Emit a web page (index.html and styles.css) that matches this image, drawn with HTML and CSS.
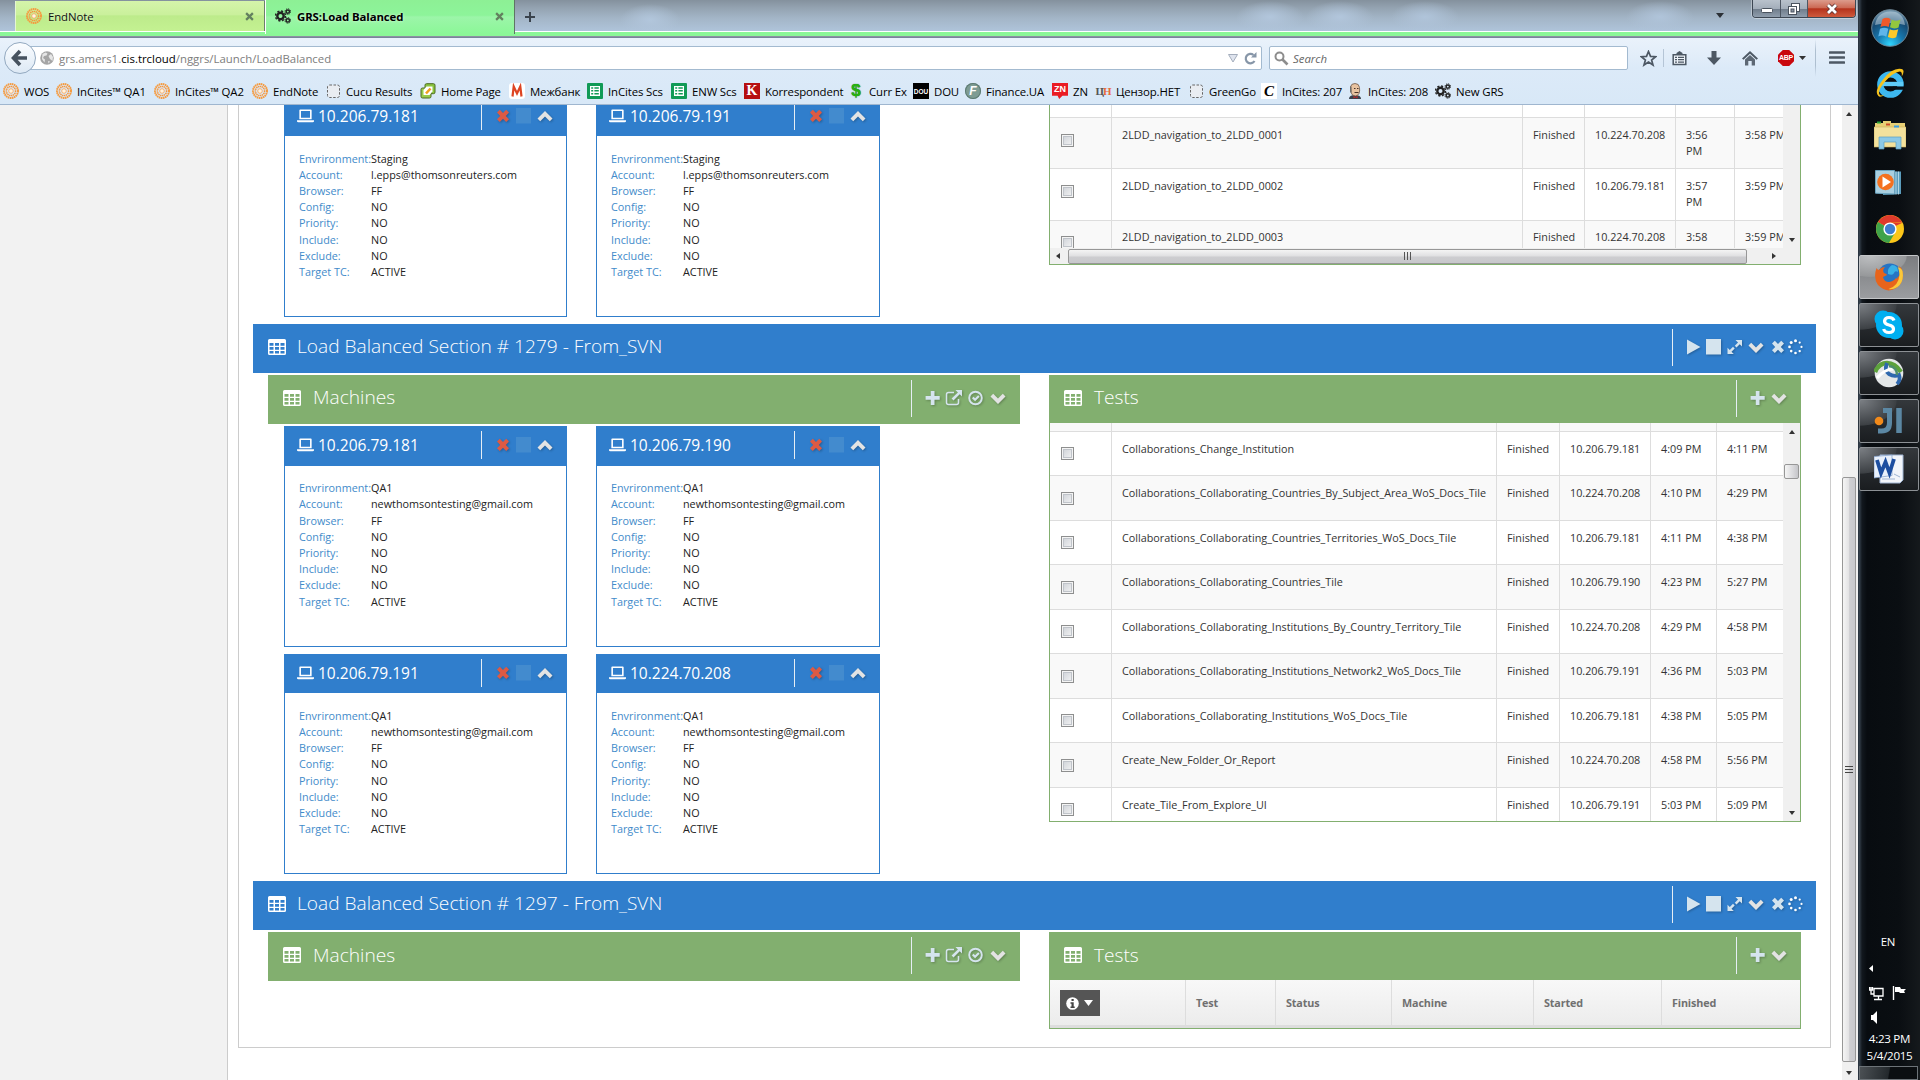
FILE: index.html
```
<!DOCTYPE html>
<html lang="en">
<head>
<meta charset="utf-8">
<title>GRS:Load Balanced</title>
<link rel="stylesheet" href="styles.css">
</head>
<body>
<svg class="sprite" aria-hidden="true">
  <symbol id="table" viewBox="0 0 18 16"><path fill="#fff" fill-rule="evenodd" d="M1.5 0h15Q18 0 18 1.500v13q0 1.500-1.500 1.500h-15Q0 16 0 14.500v-13Q0 0 1.500 0zM1.500 4v2.800h4V4zM7 4v2.800h4V4zm5.500 0v2.800h4V4zM1.500 8v2.800h4V8zM7 8v2.800h4V8zm5.500 0v2.800h4V8zM1.500 12v2.600h4V12zM7 12v2.600h4V12zm5.500 0v2.600h4V12z"/></symbol>
  <symbol id="laptop" viewBox="0 0 18 14"><path fill="#fff" fill-rule="evenodd" d="M3.500 0h11Q15.500 0 15.500 1v9.500h-13V1Q2.500 0 3.500 0zM4.200 1.600v7.300h9.600V1.600zM0 11.500h18v1q0 1-1.500 1h-15Q0 13.500 0 12.500z"/></symbol>
  <symbol id="plus" viewBox="0 0 16 16"><path d="M5.800 1h3.700v5.100H14.700v3.700H9.500V15H5.800V9.800H.6V6.100h5.200z"/></symbol>
  <symbol id="down" viewBox="0 0 16 16"><path d="M8 14L.5 6.500l2.700-2.700L8 8.600l4.800-4.800L15.500 6.500z"/></symbol>
  <symbol id="up" viewBox="0 0 16 16"><path d="M8 3l7.500 7.500-2.700 2.700L8 8.400l-4.800 4.800L.5 10.500z"/></symbol>
  <symbol id="times" viewBox="0 0 16 16"><path d="M3.800 1.800L7 5l3.200-3.200L13 4.600 9.800 7.900l3.200 3.300-2.800 2.800L7 10.800 3.800 14 1 11.200l3.200-3.300L1 4.600z"/></symbol>
  <symbol id="play" viewBox="0 0 16 16"><path d="M1 .5l13.500 7.500L1 15.500z"/></symbol>
  <symbol id="stop" viewBox="0 0 16 16"><path d="M0 0h15v15.500H0z"/></symbol>
  <symbol id="expand" viewBox="0 0 16 16"><path d="M8.500 1H15v6.500l-2.300-2.300L9.500 8.400 7.800 6.700 11 3.500zM.500 15V8.700L2.800 11 6 7.800l1.700 1.700-3.200 3.200L6.800 15z"/></symbol>
  <symbol id="spin" viewBox="0 0 16 16"><g fill="#fff"><circle cx="7.500" cy="1.800" r="1.500"/><circle cx="11.700" cy="3.600" r="1.100"/><circle cx="13.500" cy="7.900" r="1.100"/><circle cx="11.700" cy="12.100" r="1.200"/><circle cx="7.500" cy="14" r="1.300"/><circle cx="3.200" cy="12.100" r="1.300"/><circle cx="1.500" cy="7.900" r="1.300"/><circle cx="3.200" cy="3.600" r="1.500"/></g></symbol>
  <symbol id="share" viewBox="0 0 18 16"><path d="M10.500 0H17v6.500l-2.300-2.300L8.500 10.500 6.600 8.600l6.300-6.200z"/><path d="M9 2.500H3.500Q1.500 2.500 1.500 4.500v8q0 2 2 2h8q2 0 2-2V9" fill="none" stroke="#d5e4ee" stroke-width="1.500"/></symbol>
  <symbol id="check" viewBox="0 0 16 16"><circle cx="7.500" cy="8" r="6.300" fill="none" stroke="#d5e4ee" stroke-width="1.900"/><path d="M4 8.200l1.500-1.400 1.600 1.500 3.100-3.100 1.400 1.500-4.500 4.500z"/></symbol>
  <symbol id="ring" viewBox="0 0 16 16"><circle cx="8" cy="8" r="7" fill="none" stroke="#f59a3e" stroke-width="2" stroke-dasharray="1.600 .5"/><circle cx="8" cy="8" r="4.600" fill="none" stroke="#f7953a" stroke-width="1.500" stroke-dasharray="1.400 .5"/><circle cx="8" cy="8" r="2.300" fill="#fff3df" stroke="#f8a050" stroke-width=".8"/></symbol>
  <symbol id="dash" viewBox="0 0 16 16"><rect x="2.500" y="2" width="12" height="12.500" rx="2" fill="#e9edf2" stroke="#666" stroke-dasharray="2.500 1.500"/></symbol>
  <symbol id="sheet" viewBox="0 0 16 16"><rect width="16" height="16" rx="1" fill="#119a56"/><path fill="#fff" fill-rule="evenodd" d="M3 3h10v10H3zm1.200 1.200v1.500h2V4.200zm3.200 0v1.500h4.400V4.200zM4.200 7v1.500h2V7zm3.200 0v1.500h4.400V7zM4.200 9.900v1.700h2V9.900zm3.200 0v1.700h4.400V9.900z"/></symbol>
  <symbol id="gears" viewBox="0 0 16 16"><g fill="none" stroke="#222"><circle cx="5.500" cy="8" r="3.200" stroke-width="2.400"/><circle cx="5.500" cy="8" r="5" stroke-width="1.400" stroke-dasharray="2.100 1.830"/><circle cx="12.800" cy="3.600" r="1.700" stroke-width="1.500"/><circle cx="12.800" cy="3.600" r="2.800" stroke-width="1" stroke-dasharray="1.200 1"/><circle cx="12.800" cy="12.400" r="1.700" stroke-width="1.500"/><circle cx="12.800" cy="12.400" r="2.800" stroke-width="1" stroke-dasharray="1.200 1"/></g></symbol>
</svg>
<div class="browser">
  <div class="tabstrip">
    <div class="tab tab-idle"><svg class="i16"><use href="#ring"/></svg><span class="tab-name">EndNote</span><svg class="tab-x" viewBox="0 0 8 8"><path d="M1 1l6 6M7 1L1 7"/></svg></div>
    <div class="tab tab-on"><svg class="i16"><use href="#gears"/></svg><span class="tab-name">GRS:Load Balanced</span><svg class="tab-x" viewBox="0 0 8 8"><path d="M1 1l6 6M7 1L1 7"/></svg></div>
    <div class="newtab"><svg width="12" height="12" viewBox="0 0 12 12"><path d="M6 1v10M1 6h10" stroke="#3a434d" stroke-width="2"/></svg></div>
    <svg class="alltabs" viewBox="0 0 8 5"><path d="M0 0h8L4 5z" fill="#2b3036"/></svg>
    <div class="winbtns">
      <span class="wb wb-min"><svg width="14" height="14" viewBox="0 0 14 14"><rect x="1.500" y="6.500" width="11" height="4" rx="1" fill="#fff" stroke="#4a535e"/></svg></span>
      <span class="wb wb-max"><svg width="14" height="14" viewBox="0 0 14 14"><g fill="#fff" stroke="#4a535e"><rect x="4.500" y="1.500" width="8" height="8"/><rect x="1.500" y="4.500" width="8" height="8"/><rect x="4" y="7" width="3" height="3" fill="#8b95a2"/></g></svg></span>
      <span class="wb wb-close"><svg width="14" height="14" viewBox="0 0 14 14"><path d="M3 3l8 8M11 3l-8 8" stroke="#5a3030" stroke-width="4.500"/><path d="M3 3l8 8M11 3l-8 8" stroke="#fff" stroke-width="2.800"/></svg></span>
    </div>
  </div>
  <div class="toolbar">
    <div class="nav">
      <div class="back"><svg width="18" height="18" viewBox="0 0 18 18"><path d="M9 2L2.500 9 9 16M3 9h13" fill="none" stroke="#46525f" stroke-width="3.600"/></svg></div>
      <div class="url">
        <svg class="globe" viewBox="0 0 14 14"><circle cx="7" cy="7" r="6.800" fill="#a5a5a5"/><path d="M2.500 3l3-1.500 2 1-1 2-2.500.5-1 2 2 1.500-.5 3L2 8zM8.500 5l2.500-2 2 3-.5 4-2.500-2zM8 10l2 .5-1.500 2z" fill="#e6e6e6"/></svg>
        <span class="address">grs.amers1.<b>cis.trcloud</b>/nggrs/Launch/LoadBalanced</span>
        <svg class="droptri" viewBox="0 0 10 9"><path d="M.5.500h9L5 8z" fill="#dfe4ee" stroke="#a4adbc"/></svg>
        <svg class="reload" viewBox="0 0 13 13"><path d="M10.500 9A4.700 4.700 0 1 1 9.500 3" fill="none" stroke="#8796a8" stroke-width="2.200"/><path d="M7 5.500h5.500V0z" fill="#8796a8"/></svg>
      </div>
      <div class="search"><svg width="15" height="15" viewBox="0 0 15 15"><circle cx="5.500" cy="5.500" r="4" fill="none" stroke="#8d8d8d" stroke-width="2"/><path d="M8.500 8.500L13.500 13.500" stroke="#8d8d8d" stroke-width="2.600"/></svg><i>Search</i></div>
      <div class="navicons">
        <span class="ni sep"><svg width="17" height="17" viewBox="0 0 17 17"><path d="M8.500 1.500l2 4.900 5.100.3-4 3.300 1.400 5-4.500-2.900L4 15l1.400-5-4-3.300 5.100-.3z" fill="none" stroke="#4d5864" stroke-width="1.700"/></svg></span>
        <span class="ni"><svg width="15" height="15" viewBox="0 0 15 15"><path d="M1.200 3.700h12.600v9.800H1.200z" fill="#eef3f9" stroke="#4d5864" stroke-width="1.500"/><path d="M4.500 4V2L7.500 0l3 2v2z" fill="#4d5864"/><path d="M3 6.300h2M3 8.700h2M3 11.100h2M6 6.300h6M6 8.700h6M6 11.100h6" stroke="#4d5864" stroke-width="1.300"/></svg></span>
        <span class="ni"><svg width="14" height="14" viewBox="0 0 14 14"><path d="M4.500 0h5v6.500H14L7 14 0 6.500h4.500z" fill="#4d5864"/></svg></span>
        <span class="ni"><svg width="16" height="15" viewBox="0 0 16 15"><path d="M8 0l8 7.500-1.500 1.200L8 2.700 1.500 8.700 0 7.500z" fill="#4d5864"/><path d="M3 8.500L8 4l5 4.500V14.500H9.700V10H6.300v4.500H3z" fill="#5d6874"/></svg></span>
        <span class="ni abpbox"><span class="abp">ABP</span><svg width="7" height="4" viewBox="0 0 7 4"><path d="M0 0h7L3.500 4z" fill="#333"/></svg></span>
        <span class="ni menu"><svg width="16" height="14" viewBox="0 0 16 14"><path d="M1 1.500h14M1 6.500h14M1 11.500h14" stroke="#4d5864" stroke-width="2.600" stroke-linecap="round"/></svg></span>
      </div>
    </div>
    <div class="bookmarks">
      <span class="bm"><svg class="i16"><use href="#ring"/></svg>WOS</span>
      <span class="bm"><svg class="i16"><use href="#ring"/></svg>InCites™ QA1</span>
      <span class="bm"><svg class="i16"><use href="#ring"/></svg>InCites™ QA2</span>
      <span class="bm"><svg class="i16"><use href="#ring"/></svg>EndNote</span>
      <span class="bm"><svg class="i16"><use href="#dash"/></svg>Cucu Results</span>
      <span class="bm"><svg class="i16" viewBox="0 0 16 16"><rect x="5" y=".7" width="10" height="10" rx="1.500" fill="#8ac43f" stroke="#4c6b22"/><rect x="1" y="5" width="10" height="10" rx="1.500" fill="#9bcb4a" stroke="#4c6b22"/><path d="M6.500 3.500h6v5l-3 3.500h-6V7z" fill="#fff"/><path d="M6 10.500L10.500 5.500" stroke="#f0a020" stroke-width="2.600"/></svg>Home Page</span>
      <span class="bm"><svg class="i16" viewBox="0 0 16 16"><rect width="16" height="16" rx="3" fill="#fff"/><path d="M3.500 13.500l1.200-10 3.300 7 3.300-7 1.200 10" fill="none" stroke="#dd4422" stroke-width="2.200"/></svg>Межбанк</span>
      <span class="bm"><svg class="i16"><use href="#sheet"/></svg>InCites Scs</span>
      <span class="bm"><svg class="i16"><use href="#sheet"/></svg>ENW Scs</span>
      <span class="bm"><span class="fav fav-k">K</span>Korrespondent</span>
      <span class="bm"><span class="fav fav-usd">$</span>Curr Ex</span>
      <span class="bm"><span class="fav fav-dou">DOU</span>DOU</span>
      <span class="bm"><span class="fav fav-fin">F</span>Finance.UA</span>
      <span class="bm"><span class="fav fav-zn">ZN</span>ZN</span>
      <span class="bm"><span class="fav fav-cn">Ц<em>Н</em></span>Цензор.НЕТ</span>
      <span class="bm"><svg class="i16"><use href="#dash"/></svg>GreenGo</span>
      <span class="bm"><span class="fav fav-c">C</span>InCites: 207</span>
      <span class="bm"><svg class="i16" viewBox="0 0 16 16"><path d="M2 16q0-4 6-4t6 4z" fill="#39424e"/><path d="M3.500 4Q4 .5 8 .500t4.500 4-.5 6Q10.500 13 8.500 13 5 13 4 9.500z" fill="#e8c3a0" stroke="#705848" stroke-width=".8"/><path d="M3.200 3v6l1.300 1V4z" fill="#666"/><path d="M7 5.500h1.500M10 5.500h1.500M7.500 9.500h4" stroke="#4a3428"/><path d="M6.500 13l4 2.500V13l-4 2.500z" fill="#c22"/></svg>InCites: 208</span>
      <span class="bm"><svg class="i16"><use href="#gears"/></svg>New GRS</span>
    </div>
  </div>
  <div class="viewport">
    <div class="sidebar"></div>
    <div class="page">
      <div class="panel">
        <div class="sec-body sec-first">
          <div class="machines">
            <div class="cards">
              <div class="card"><div class="card-head"><svg class="lap"><use href="#laptop"/></svg><span class="ip">10.206.79.181</span><span class="card-tools"><svg class="ic red"><use href="#times"/></svg><svg class="ic sq"><use href="#stop"/></svg><svg class="ic gray"><use href="#up"/></svg></span></div>
                <dl><dt>Envrironment:</dt><dd>Staging</dd><dt>Account:</dt><dd>l.epps@thomsonreuters.com</dd><dt>Browser:</dt><dd>FF</dd><dt>Config:</dt><dd>NO</dd><dt>Priority:</dt><dd>NO</dd><dt>Include:</dt><dd>NO</dd><dt>Exclude:</dt><dd>NO</dd><dt>Target TC:</dt><dd>ACTIVE</dd></dl></div>
              <div class="card"><div class="card-head"><svg class="lap"><use href="#laptop"/></svg><span class="ip">10.206.79.191</span><span class="card-tools"><svg class="ic red"><use href="#times"/></svg><svg class="ic sq"><use href="#stop"/></svg><svg class="ic gray"><use href="#up"/></svg></span></div>
                <dl><dt>Envrironment:</dt><dd>Staging</dd><dt>Account:</dt><dd>l.epps@thomsonreuters.com</dd><dt>Browser:</dt><dd>FF</dd><dt>Config:</dt><dd>NO</dd><dt>Priority:</dt><dd>NO</dd><dt>Include:</dt><dd>NO</dd><dt>Exclude:</dt><dd>NO</dd><dt>Target TC:</dt><dd>ACTIVE</dd></dl></div>
            </div>
          </div>
          <div class="tests">
            <div class="grid-box box-short">
              <div class="scroll-row">
                <div class="rows cols-a">
                  <div class="row lead"><span></span><span></span><span></span><span></span><span></span><span></span></div>
                  <div class="row alt"><span><i class="cb"></i></span><span>2LDD_navigation_to_2LDD_0001</span><span>Finished</span><span>10.224.70.208</span><span>3:56 PM</span><span>3:58 PM</span></div>
                  <div class="row"><span><i class="cb"></i></span><span>2LDD_navigation_to_2LDD_0002</span><span>Finished</span><span>10.206.79.181</span><span>3:57 PM</span><span>3:59 PM</span></div>
                  <div class="row alt"><span><i class="cb"></i></span><span>2LDD_navigation_to_2LDD_0003</span><span>Finished</span><span>10.224.70.208</span><span>3:58 PM</span><span>3:59 PM</span></div>
                </div>
                <div class="vbar"><span></span><i class="tri tri-down"></i></div>
              </div>
              <div class="hbar"><i class="tri tri-left"></i><div class="hthumb"><svg width="9" height="8" viewBox="0 0 9 8"><path d="M1.500 0v8M4.500 0v8M7.500 0v8" stroke="#555"/></svg></div><i class="tri tri-right"></i></div>
            </div>
          </div>
        </div>

        <div class="bar blue"><svg class="ti"><use href="#table"/></svg><h2>Load Balanced Section # 1279 - From_SVN</h2><div class="tools t-sec"><svg class="ic"><use href="#play"/></svg><svg class="ic"><use href="#stop"/></svg><svg class="ic"><use href="#expand"/></svg><svg class="ic gray"><use href="#down"/></svg><svg class="ic"><use href="#times"/></svg><svg class="ic"><use href="#spin"/></svg></div></div>
        <div class="sec-body">
          <div class="machines">
            <div class="bar green"><svg class="ti"><use href="#table"/></svg><h2>Machines</h2><div class="tools t-mach"><svg class="ic"><use href="#plus"/></svg><svg class="ic wide"><use href="#share"/></svg><svg class="ic"><use href="#check"/></svg><svg class="ic gray"><use href="#down"/></svg></div></div>
            <div class="cards">
              <div class="card"><div class="card-head"><svg class="lap"><use href="#laptop"/></svg><span class="ip">10.206.79.181</span><span class="card-tools"><svg class="ic red"><use href="#times"/></svg><svg class="ic sq"><use href="#stop"/></svg><svg class="ic gray"><use href="#up"/></svg></span></div>
                <dl><dt>Envrironment:</dt><dd>QA1</dd><dt>Account:</dt><dd>newthomsontesting@gmail.com</dd><dt>Browser:</dt><dd>FF</dd><dt>Config:</dt><dd>NO</dd><dt>Priority:</dt><dd>NO</dd><dt>Include:</dt><dd>NO</dd><dt>Exclude:</dt><dd>NO</dd><dt>Target TC:</dt><dd>ACTIVE</dd></dl></div>
              <div class="card"><div class="card-head"><svg class="lap"><use href="#laptop"/></svg><span class="ip">10.206.79.190</span><span class="card-tools"><svg class="ic red"><use href="#times"/></svg><svg class="ic sq"><use href="#stop"/></svg><svg class="ic gray"><use href="#up"/></svg></span></div>
                <dl><dt>Envrironment:</dt><dd>QA1</dd><dt>Account:</dt><dd>newthomsontesting@gmail.com</dd><dt>Browser:</dt><dd>FF</dd><dt>Config:</dt><dd>NO</dd><dt>Priority:</dt><dd>NO</dd><dt>Include:</dt><dd>NO</dd><dt>Exclude:</dt><dd>NO</dd><dt>Target TC:</dt><dd>ACTIVE</dd></dl></div>
              <div class="card"><div class="card-head"><svg class="lap"><use href="#laptop"/></svg><span class="ip">10.206.79.191</span><span class="card-tools"><svg class="ic red"><use href="#times"/></svg><svg class="ic sq"><use href="#stop"/></svg><svg class="ic gray"><use href="#up"/></svg></span></div>
                <dl><dt>Envrironment:</dt><dd>QA1</dd><dt>Account:</dt><dd>newthomsontesting@gmail.com</dd><dt>Browser:</dt><dd>FF</dd><dt>Config:</dt><dd>NO</dd><dt>Priority:</dt><dd>NO</dd><dt>Include:</dt><dd>NO</dd><dt>Exclude:</dt><dd>NO</dd><dt>Target TC:</dt><dd>ACTIVE</dd></dl></div>
              <div class="card"><div class="card-head"><svg class="lap"><use href="#laptop"/></svg><span class="ip">10.224.70.208</span><span class="card-tools"><svg class="ic red"><use href="#times"/></svg><svg class="ic sq"><use href="#stop"/></svg><svg class="ic gray"><use href="#up"/></svg></span></div>
                <dl><dt>Envrironment:</dt><dd>QA1</dd><dt>Account:</dt><dd>newthomsontesting@gmail.com</dd><dt>Browser:</dt><dd>FF</dd><dt>Config:</dt><dd>NO</dd><dt>Priority:</dt><dd>NO</dd><dt>Include:</dt><dd>NO</dd><dt>Exclude:</dt><dd>NO</dd><dt>Target TC:</dt><dd>ACTIVE</dd></dl></div>
            </div>
          </div>
          <div class="tests">
            <div class="bar green low"><svg class="ti"><use href="#table"/></svg><h2>Tests</h2><div class="tools t-test"><svg class="ic"><use href="#plus"/></svg><svg class="ic gray"><use href="#down"/></svg></div></div>
            <div class="grid-box box-tall">
              <div class="scroll-row">
                <div class="rows cols-b">
                  <div class="row alt lead"><span></span><span></span><span></span><span></span><span></span><span></span></div>
                  <div class="row"><span><i class="cb"></i></span><span>Collaborations_Change_Institution</span><span>Finished</span><span>10.206.79.181</span><span>4:09 PM</span><span>4:11 PM</span></div>
                  <div class="row alt"><span><i class="cb"></i></span><span>Collaborations_Collaborating_Countries_By_Subject_Area_WoS_Docs_Tile</span><span>Finished</span><span>10.224.70.208</span><span>4:10 PM</span><span>4:29 PM</span></div>
                  <div class="row"><span><i class="cb"></i></span><span>Collaborations_Collaborating_Countries_Territories_WoS_Docs_Tile</span><span>Finished</span><span>10.206.79.181</span><span>4:11 PM</span><span>4:38 PM</span></div>
                  <div class="row alt"><span><i class="cb"></i></span><span>Collaborations_Collaborating_Countries_Tile</span><span>Finished</span><span>10.206.79.190</span><span>4:23 PM</span><span>5:27 PM</span></div>
                  <div class="row"><span><i class="cb"></i></span><span>Collaborations_Collaborating_Institutions_By_Country_Territory_Tile</span><span>Finished</span><span>10.224.70.208</span><span>4:29 PM</span><span>4:58 PM</span></div>
                  <div class="row alt"><span><i class="cb"></i></span><span>Collaborations_Collaborating_Institutions_Network2_WoS_Docs_Tile</span><span>Finished</span><span>10.206.79.191</span><span>4:36 PM</span><span>5:03 PM</span></div>
                  <div class="row"><span><i class="cb"></i></span><span>Collaborations_Collaborating_Institutions_WoS_Docs_Tile</span><span>Finished</span><span>10.206.79.181</span><span>4:38 PM</span><span>5:05 PM</span></div>
                  <div class="row alt"><span><i class="cb"></i></span><span>Create_New_Folder_Or_Report</span><span>Finished</span><span>10.224.70.208</span><span>4:58 PM</span><span>5:56 PM</span></div>
                  <div class="row"><span><i class="cb"></i></span><span>Create_Tile_From_Explore_UI</span><span>Finished</span><span>10.206.79.191</span><span>5:03 PM</span><span>5:09 PM</span></div>
                </div>
                <div class="vbar"><i class="tri tri-up"></i><div class="vthumb"></div><i class="tri tri-down"></i></div>
              </div>
            </div>
          </div>
        </div>

        <div class="bar blue"><svg class="ti"><use href="#table"/></svg><h2>Load Balanced Section # 1297 - From_SVN</h2><div class="tools t-sec"><svg class="ic"><use href="#play"/></svg><svg class="ic"><use href="#stop"/></svg><svg class="ic"><use href="#expand"/></svg><svg class="ic gray"><use href="#down"/></svg><svg class="ic"><use href="#times"/></svg><svg class="ic"><use href="#spin"/></svg></div></div>
        <div class="sec-body sec-last">
          <div class="machines">
            <div class="bar green"><svg class="ti"><use href="#table"/></svg><h2>Machines</h2><div class="tools t-mach"><svg class="ic"><use href="#plus"/></svg><svg class="ic wide"><use href="#share"/></svg><svg class="ic"><use href="#check"/></svg><svg class="ic gray"><use href="#down"/></svg></div></div>
          </div>
          <div class="tests">
            <div class="bar green low"><svg class="ti"><use href="#table"/></svg><h2>Tests</h2><div class="tools t-test"><svg class="ic"><use href="#plus"/></svg><svg class="ic gray"><use href="#down"/></svg></div></div>
            <div class="grid-box box-head">
              <div class="thead"><span><span class="info"><svg width="13" height="13" viewBox="0 0 13 13"><circle cx="6.500" cy="6.500" r="6.300" fill="#fff"/><path d="M5.500 2h2.200v2H5.500zM4.500 5.200h3.200v4.300h1V11H4.500V9.500h1V6.700h-1z" fill="#444"/></svg><svg width="9" height="6" viewBox="0 0 9 6"><path d="M0 0h9L4.500 6z" fill="#fff"/></svg></span></span><span>Test</span><span>Status</span><span>Machine</span><span>Started</span><span>Finished</span></div>
            </div>
          </div>
        </div>
      </div>
    </div>
    <div class="pagebar"><i class="tri tri-up"></i><div class="pagethumb"><svg width="8" height="9" viewBox="0 0 8 9"><path d="M0 1.500h8M0 4.500h8M0 7.500h8" stroke="#444" stroke-width="1.200"/></svg></div><i class="tri tri-down"></i></div>
  </div>
</div>

<div class="taskbar">
  <svg class="start" viewBox="0 0 38 38"><defs><radialGradient id="orb" cx=".5" cy=".95" r=".9"><stop offset="0" stop-color="#2fd6ff"/><stop offset=".4" stop-color="#1777ad"/><stop offset=".75" stop-color="#174a72"/><stop offset="1" stop-color="#6f93ab"/></radialGradient></defs><circle cx="19" cy="19" r="18.300" fill="url(#orb)" stroke="#6e8797" stroke-width="1"/><path d="M4 16Q6 3 19 2.500T34 16Q20 12 4 16z" fill="#cfe0ea" opacity=".5"/><path d="M11.500 10q4-2.500 8 0l-1.800 8q-4-2-8.200 0z" fill="#f0592a"/><path d="M20.800 10.500q4 2.500 8.700 0l-2 8q-4.500 2-8.500-.2z" fill="#93c73d"/><path d="M9 19.800q4-2.200 8.300 0l-2 8q-4-2.500-8-.3z" fill="#5fb5ea"/><path d="M18.700 20.200q4 2.200 8.500 0l-2 8q-4 2-8.300-.2z" fill="#fdc92b"/></svg>
  <svg class="ie" viewBox="0 0 30 32"><circle cx="15.500" cy="17" r="10.500" fill="none" stroke="#3db8f0" stroke-width="6.500"/><path d="M7 16.500h21.500" stroke="#5fcbf7" stroke-width="4.500"/><path d="M18 19h12v3.500H17z" fill="#0a0f14"/><path d="M3 29Q-2 24 8 11.500T27 1q4 1 0 8 1-5.500-2-5.500-7 1-15 10.500T4 27q1 3 6 0-5 4-7 2z" fill="#f6c21c"/></svg>
  <svg class="folder" viewBox="0 0 32 30"><path d="M1 3h8v-2h8v2h14v24H1z" fill="#e8cf74"/><path d="M0 7h32v20H0z" fill="#f3e19c" stroke="#cbb05a" stroke-width=".6"/><path d="M3 1.500h4v2H3z" fill="#27a338"/><path d="M12 3.500h4v2h-4z" fill="#cc4c2a"/><path d="M20 5.500h5v2h-5z" fill="#3a9ce0"/><path d="M5 17h22v12h-5v-7H10v7H5z" fill="#8cc9e6" stroke="#5a9fc2" stroke-width=".7"/></svg>
  <svg class="wmp" viewBox="0 0 27 26"><path d="M8 1.500h18V24l-18 1z" fill="#5b9cbc"/><path d="M23.500 1.500v23M21 1.500v23" stroke="#c7e3ef" stroke-width=".8"/><path d="M.5.500h19v23.500l-19-.8z" fill="#a9cfe0" stroke="#6aa3bf"/><circle cx="10.500" cy="12" r="8.300" fill="#f4711f"/><path d="M7.500 6.500l8.500 5.500-8.500 5.500z" fill="#fff"/></svg>
  <svg class="chrome" viewBox="0 0 28 28"><circle cx="14" cy="14" r="14" fill="#fcc619"/><path d="M14 14L1.900 7A14 14 0 0 1 26.100 7L14 7.600z" fill="#df3a2c"/><path d="M26.500 7.500H14v6L26 8z" fill="#df3a2c"/><path d="M14 14L1.900 7a14 14 0 0 0 11 21l6.500-11z" fill="#3fa34a"/><circle cx="14" cy="14" r="6.600" fill="#fff"/><circle cx="14" cy="14" r="5.200" fill="#3f7fd0"/></svg>
  <div class="apps">
    <div class="app app-on"><svg width="30" height="30" viewBox="0 0 30 30"><circle cx="16" cy="14" r="12.500" fill="#2674c4"/><path d="M18 3q6 0 6 7-3-2-4 1t-6 1q-1-6 4-9z" fill="#38b0e6"/><path d="M28 8q3 12-6 18T4 23Q-1 16 2.500 6q1 2 2.500 2 2-3 6-3-3 3-1 6 3 1 3 2-2 1-4 2 1 5 6 5 5-1 7-4 3 2 1 0 5-4 2-12 3 2 3 4z" fill="#e8641b"/><path d="M28.500 9q2 11-5 16-5 3-9 2 10-3 11-14-.5-6-2-8 4 1 5 4z" fill="#fbc83a"/></svg></div>
    <div class="app"><svg width="30" height="30" viewBox="0 0 30 30"><circle cx="9" cy="9" r="8.500" fill="#00aff0"/><circle cx="21" cy="21" r="8.500" fill="#00aff0"/><circle cx="15" cy="15" r="13" fill="#00aff0"/><path d="M20 10.500Q19 7.500 15 7.500t-4.500 3.500q0 3 4.500 4t4.500 4q0 3.500-4.500 3.500T9.700 19" fill="none" stroke="#fff" stroke-width="3.200"/></svg></div>
    <div class="app"><svg width="30" height="30" viewBox="0 0 30 30"><circle cx="15" cy="15" r="14.300" fill="#e4e7e8"/><path d="M1 14Q5 5 13 5t14 9" fill="none" stroke="#5da23c" stroke-width="4.500"/><path d="M13 5q-3 8 2 11t10 1q2 5-2 9" fill="none" stroke="#2e68ae" stroke-width="3.800"/><path d="M3 20q8-9 16-9" fill="none" stroke="#fff" stroke-width="3"/><path d="M15 8q8 1 8 9" fill="none" stroke="#4e8f6d" stroke-width="2.500"/></svg></div>
    <div class="app"><svg width="30" height="30" viewBox="0 0 30 30"><path d="M9 4.500h6.500V17q0 8-8 8H4" fill="none" stroke="#5b87a3" stroke-width="5"/><path d="M25 2v25" stroke="#5b87a3" stroke-width="5.500"/><circle cx="5" cy="15" r="4.300" fill="#f28a1a"/></svg></div>
    <div class="app"><svg width="30" height="30" viewBox="0 0 30 30"><path d="M6 1h23v25l-3 3H6z" fill="#f2f5fa" stroke="#9fb4d2"/><path d="M0 2.500L18 1v20.500L0 24z" fill="#e8f0fb" stroke="#7d9cc9" stroke-width=".7"/><path d="M3 6l4 13L11.500 8l4 11L20 5" fill="none" stroke="#1c4ea0" stroke-width="3.800"/><path d="M8 25h13M20 20l6 3" stroke="#9fb4d2"/></svg></div>
  </div>
  <div class="tray">
    <span class="lang">EN</span>
    <svg class="tr-arrow" viewBox="0 0 4 7"><path d="M4 0v7L0 3.500z" fill="#fff"/></svg>
    <div class="tr-row"><svg width="15" height="15" viewBox="0 0 15 15"><path d="M5 2.500h9v7.500H5zM9.500 10v3.500M5 13.500h8M2 1v4.500M.5 1v3h3V1M2 5.500V8h3" fill="none" stroke="#fff" stroke-width="1.300"/></svg><svg width="15" height="14" viewBox="0 0 15 14"><path d="M1.500 0v14" stroke="#fff" stroke-width="1.400"/><path d="M3 1h5l1 2h5l-2 2 1 2H8L7 6H3z" fill="#fff"/></svg></div>
    <svg class="tr-snd" viewBox="0 0 7 13"><path d="M0 4h2l4-4v13L2 9H0z" fill="#fff"/></svg>
    <span class="clock">4:23 PM</span>
    <span class="date">5/4/2015</span>
  </div>
  <div class="showdesk"></div>
</div>
</body>
</html>
```
FILE: styles.css
```
* { box-sizing: border-box; }
body {
  margin: 0;
  width: 1920px;
  height: 1080px;
  overflow: hidden;
  display: flex;
  font-family: "Open Sans", "Noto Sans", sans-serif;
  font-size: 10.8px;
  color: #333;
  background: #fff;
}
svg { display: block; flex: none; }
.sprite { position: absolute; width: 0; height: 0; }
.i16 { width: 16px; height: 16px; }

/* browser window */
.browser { width: 1859px; flex: none; display: flex; flex-direction: column; border-right: 1px solid #2b3540; }

.tabstrip {
  height: 38px;
  flex: none;
  display: flex;
  padding-left: 15px;
  background:
    linear-gradient(to bottom, transparent 31px, #fff 31px, #fff 32px, #8bf797 32px, #8bf797 36px, #a39ba9 36px, #77859a 37px),
    radial-gradient(ellipse 30px 16px at 650px 20px, #b2c6dc, transparent),
    radial-gradient(ellipse 34px 16px at 1270px 17px, #b2c6dc, transparent),
    radial-gradient(ellipse 34px 16px at 1340px 17px, #b2c6dc, transparent),
    radial-gradient(ellipse 34px 16px at 1425px 17px, #b0c4da, transparent),
    radial-gradient(ellipse 34px 16px at 1660px 17px, #b0c4da, transparent),
    linear-gradient(to bottom, #84919d 0, #94a3b1 8px, #a3b5c7 18px, #afc4da 31px);
  font-size: 11.4px;
  letter-spacing: -.1px;
  color: #111;
}
.tab { display: flex; align-items: center; }
.tab-idle { width: 250px; height: 30px; margin-top: 1px; padding: 0 10px 0 10px; background: linear-gradient(#d5f4aa, #caf09c 45%, #bdeb8b 50%, #c4f192); border-left: 1px solid #e6f6d2; border-right: 1px solid #6d7d6d; }
.tab-on { width: 250px; height: 34px; padding: 0 10px 2px 9px; background: linear-gradient(#8df095, #8df49a 45%, #9cf5a9 50%, #8bf797); border-left: 1px solid #fff; border-right: 1px solid #5f7464; font-weight: 700; color: #000; }
.tab-name { flex: 1; margin-left: 6px; text-shadow: 0 0 3px rgba(255,255,255,.7); }
.tab-x { width: 9px; height: 9px; stroke: #63805f; stroke-width: 2; }
.newtab { padding: 11px 0 0 9px; flex: 1; }
.alltabs { width: 8px; height: 5px; margin: 13px 28px 0 0; }
.winbtns { display: flex; width: 104px; height: 18px; margin-right: 2px; border: 1px solid #3d4753; border-top: 0; border-radius: 0 0 4px 4px; box-shadow: 0 0 0 1px rgba(255,255,255,.35); overflow: hidden; }
.wb { display: flex; align-items: center; justify-content: center; width: 28px; background: linear-gradient(#b9c2cc, #a3aeba 50%, #6f7c8a 52%, #8f9dac); border-right: 1px solid #4d5763; }
.wb-max { width: 27px; }
.wb-close { width: 47px; background: linear-gradient(#dc9c8c, #cc6a55 45%, #b5331c 52%, #cf5a3c); border-right: 0; }

.toolbar { height: 67px; flex: none; background: linear-gradient(#eaf2fb, #dceaf8 45%, #d8e8f7); border-bottom: 1px solid #9fb6cf; font-size: 11.4px; color: #000; }
.nav { height: 40px; display: flex; align-items: center; padding-left: 4px; }
.back { width: 32px; height: 32px; border-radius: 50%; border: 1px solid #93a9c0; background: linear-gradient(#fbfdff, #dde9f5); display: flex; align-items: center; justify-content: center; z-index: 1; flex: none; }
.url { flex: 1; height: 24px; margin-left: -8px; background: #fff; border: 1px solid #a3bad0; border-radius: 2px; display: flex; align-items: center; padding: 0 4px 0 11px; }
.globe { width: 14px; height: 14px; }
.address { flex: 1; margin-left: 5px; color: #7d7d7d; }
.address b { font-weight: 400; color: #000; }
.droptri { width: 10px; height: 9px; margin-right: 6px; }
.reload { width: 13px; height: 13px; }
.search { width: 359px; height: 24px; margin-left: 7px; background: #fff; border: 1px solid #a3bad0; border-radius: 2px; display: flex; align-items: center; gap: 4px; padding-left: 4px; color: #666; }
.navicons { display: grid; grid-template-columns: 31px 30px 40px 32px 50px 42px; width: 225px; margin-left: 5px; height: 40px; }
.ni { display: flex; align-items: center; justify-content: center; }
.sep { background: linear-gradient(#b5c5d6, #b5c5d6) right center / 1px 18px no-repeat; }
.abpbox { justify-content: flex-start; padding-left: 12px; gap: 5px; background: linear-gradient(transparent, #aebfd0 30%, #aebfd0 70%, transparent) right center / 1px 38px no-repeat; }
.abp { width: 16px; height: 16px; background: #c9070d; clip-path: polygon(30% 0, 70% 0, 100% 30%, 100% 70%, 70% 100%, 30% 100%, 0 70%, 0 30%); color: #fff; font: 700 7px/16px "Liberation Sans", sans-serif; text-align: center; letter-spacing: -.2px; }

.bookmarks { height: 26px; padding-left: 3px; display: grid; grid-template-columns: 53px 98px 98px 73px 95px 89px 78px 84px 73px 104px 65px 52px 87px 43px 93px 73px 86px 88px 80px; letter-spacing: -.13px; }
.bm { display: flex; align-items: center; gap: 5px; white-space: nowrap; }
.fav { width: 16px; height: 16px; flex: none; text-align: center; font: 700 13px/16px "Liberation Serif", serif; letter-spacing: 0; }
.fav-k { background: #b60f10; color: #fff; font-size: 14px; }
.fav-usd { color: #27b30f; font: 700 17px/16px "Liberation Sans", sans-serif; text-shadow: 0 0 1px #0a5200; }
.fav-dou { background: #000; color: #fff; font: 700 6.500px/17px "Liberation Sans", sans-serif; }
.fav-fin { border-radius: 50%; background: #7e9c93; color: #fff; font: italic 700 12px/16px "Liberation Sans", sans-serif; box-shadow: inset 0 0 0 1px #5c7a72; }
.fav-zn { background: #ea1c24; color: #fff; font: 700 9px/12px "Liberation Sans", sans-serif; clip-path: polygon(0 0, 100% 0, 100% 80%, 65% 80%, 45% 100%, 35% 80%, 0 80%); }
.fav-cn { color: #555; font-size: 11px; letter-spacing: -1px; }
.fav-cn em { font-style: normal; color: #ea6a3a; }
.fav-c { background: #fff; color: #000; font-style: italic; font-size: 15px; }

/* page */
.viewport { flex: 1; display: flex; overflow: hidden; min-height: 0; }
.sidebar { width: 228px; background: #f2f2f2; border-right: 1px solid #ccc; flex: none; }
.page { flex: 1; padding-left: 10px; }
.panel { width: 1593px; height: 943px; border: 1px solid #ccc; border-top: 0; padding: 0 14px; }

.bar { height: 49px; display: flex; align-items: center; padding: 0 0 4px 15px; margin-bottom: 2px; }
.bar.low { height: 48px; padding-bottom: 3px; margin: 0; }
.bar h2 { flex: 1; margin: 0 0 1px 11px; font-size: 19.150px; font-weight: 300; color: #fff; line-height: 26px; }
.green h2 { margin-left: 12px; }
.sec-last .bar h2 { margin-bottom: 0; }
.blue { background: #307ecc; }
.green { background: #82af6f; }
.ti { width: 18px; height: 16px; }
.tools { display: grid; align-items: center; height: 37px; margin-top: 2px; border-left: 1px solid #e6eef5; padding: 0 0 2px 13px; }
.t-sec { grid-template-columns: 20px 21px 21px 23px 17px 28px; }
.t-mach { grid-template-columns: 20px 23px 22px 30px; }
.t-test { grid-template-columns: 21px 30px; }
.ic { width: 16px; height: 16px; fill: #d5e4ee; filter: drop-shadow(1px 1px 1px rgba(0,0,0,.25)); }
.ic.wide { width: 18px; }
.ic.gray { fill: #e3e3e3; }
.ic.red { fill: #dd5a43; }
.ic.sq { fill: #438bce; filter: none; }

.sec-body { display: flex; gap: 29px; padding-left: 15px; }
.sec-first { height: 219px; overflow: hidden; }
.sec-first .cards { margin-top: -8.600px; }
.machines { width: 752px; flex: none; }
.tests { width: 752px; flex: none; }
.cards { display: grid; grid-template-columns: 283px 284px; column-gap: 29px; padding-left: 16px; }
.card { height: 220.600px; margin-bottom: 7px; border: 1px solid #307ecc; background: #fff; }
.card-head { height: 38.600px; background: #307ecc; display: flex; align-items: center; padding: 0 0 2px 12px; }
.lap { width: 17px; height: 14px; }
.ip { flex: 1; margin-left: 4px; color: #fff; font-size: 15.500px; line-height: 22px; }
.card-tools { display: grid; grid-template-columns: 20px 21px 29px; align-items: center; height: 28px; width: 85px; border-left: 1px solid #e6eef5; padding-left: 14px; }
.card dl { margin: 0; padding: 14.500px 0 0 14px; display: grid; grid-template-columns: 72px 1fr; line-height: 16.200px; }
.card dt { color: #428bca; white-space: nowrap; }
.card dd { margin: 0; color: #222; }

/* test tables */
.grid-box { border: 1px solid #82af6f; border-top: 0; overflow: hidden; display: flex; flex-direction: column; }
.box-short { height: 160px; }
.box-tall { height: 399px; }
.box-head { height: 49px; }
.scroll-row { flex: 1; min-height: 0; display: flex; overflow: hidden; }
.rows { width: 733px; flex: none; overflow: hidden; }
.row { display: grid; border-bottom: 1px solid #ddd; background: #fff; line-height: 16px; }
.row > span { border-left: 1px solid #ddd; padding: 9px 0 0 10px; white-space: nowrap; overflow: hidden; }
.row > span:first-child { border-left: 0; padding: 15.500px 0 0 11px; }
.row.alt { background: #f9f9f9; }
.cols-a .row { grid-template-columns: 61px 411px 62px 91px 59px 49px; height: 51.300px; }
.cols-a .row > span:nth-child(5) { white-space: normal; padding-right: 20px; }
.cols-a .row.lead { height: 13px; }
.cols-a .row > span:not(:first-child) { padding-top: 8.500px; }
.cols-b .row { grid-template-columns: 61px 385px 63px 91px 66px 67px; height: 44.500px; }
.cols-b .row.lead { height: 8.700px; }
.cb { display: block; width: 13px; height: 13px; border: 1px solid #8e8f8f; background: linear-gradient(135deg, #cbcfd5, #f6f6f6); box-shadow: inset 0 0 0 1px #f4f4f4, inset 0 0 0 2px #c0c4ca; }

.vbar { width: 17px; background: #f0f0f0; display: flex; flex-direction: column; align-items: center; justify-content: space-between; padding: 7px 0 6px; }
.vthumb { width: 15px; height: 15px; border: 1px solid #979797; border-radius: 2px; background: linear-gradient(90deg, #f5f5f5, #d9d9dc 60%, #c5c5c9); margin: 30px 0 auto; }
.tri { width: 0; height: 0; border: 3.500px solid transparent; flex: none; }
.tri-up { border-top: 0; border-bottom: 4px solid #333; }
.tri-down { border-bottom: 0; border-top: 4px solid #333; }
.tri-left { border-left: 0; border-right: 4px solid #333; }
.tri-right { border-right: 0; border-left: 4px solid #333; }
.hbar { height: 16px; background: #f0f0f0; display: flex; align-items: center; padding: 0 24px 0 6px; justify-content: space-between; }
.hthumb { width: 679px; height: 15px; margin: 0 auto 0 8px; border: 1px solid #979797; border-radius: 2px; background: linear-gradient(#f4f4f4, #dfdfe1 48%, #cdcdd0 52%, #c8c8cc); display: flex; align-items: center; justify-content: center; }

.thead { height: 48px; display: grid; grid-template-columns: 135px 90px 116px 142px 128px 139px; background: linear-gradient(#f8f8f8, #ececec 45px, #ddd 45px); font-weight: 700; color: #707070; line-height: 46px; letter-spacing: -.15px; }
.thead > span { border-left: 1px solid #ddd; height: 45px; padding-left: 10px; }
.thead > span:first-child { border-left: 0; padding-top: 10px; }
.info { display: flex; align-items: center; gap: 5px; padding-left: 6px; width: 40px; height: 26px; background: #555; }

.pagebar { width: 16px; background: #f0f0f0; display: flex; flex-direction: column; align-items: center; padding: 7px 2px 5px 0; }
.pagethumb { width: 14px; height: 585px; margin-top: 361px; margin-bottom: auto; border: 1px solid #979797; border-radius: 2px; background: linear-gradient(90deg, #f5f5f5, #e3e3e5 48%, #cfcfd2 55%, #c9c9cd); display: flex; align-items: center; justify-content: center; }

/* taskbar */
.taskbar { flex: 1; background: linear-gradient(90deg, #3a4652, #12181e 3px, #080c10 8px, #0a0e12 40px, #15191c 61px); display: flex; flex-direction: column; align-items: center; color: #fff; font-size: 11.4px; }
.start { width: 38px; height: 38px; margin-top: 9px; }
.ie { width: 30px; height: 31px; margin-top: 21px; }
.folder { width: 32px; height: 30px; margin-top: 21px; }
.wmp { width: 27px; height: 26px; margin: 20px 3px 0 0; }
.chrome { width: 28px; height: 28px; margin-top: 19px; }
.apps { display: flex; flex-direction: column; gap: 4px; margin-top: 12px; align-self: stretch; }
.app { height: 44px; margin-right: 1px; border: 1px solid #8c9094; border-radius: 2px; background: radial-gradient(ellipse 60px 42px at 0 0, #7c8085, #3c4044 60%, transparent 62%), linear-gradient(#34383c, #1a1d20); display: flex; align-items: center; justify-content: center; }
.app-on { background: radial-gradient(ellipse 60px 34px at 10px 0, #bdbfc1, #96989a 60%, transparent 62%), linear-gradient(#7b7d80, #9b9da0); border-color: #c4c6c8; }
.tray { flex: 1; display: flex; flex-direction: column; align-items: center; padding-top: 443px; letter-spacing: -.3px; line-height: 16px; }
.lang { margin-right: 3px; }
.tr-arrow { width: 4px; height: 7px; margin: 15px 36px 0 0; }
.tr-row { display: flex; gap: 8px; margin: 14px 3px 0 0; }
.tr-snd { width: 7px; height: 13px; margin: 10px 30px 7px 0; }
.clock, .date { font-size: 11.600px; }
.date { margin-top: 1px; }
.showdesk { height: 14px; align-self: stretch; margin: 0 2px 0 0; border: 1px solid #6d7378; background: linear-gradient(100deg, #4c5155, #23282c 50%, #0b0e11 52%); }
```
